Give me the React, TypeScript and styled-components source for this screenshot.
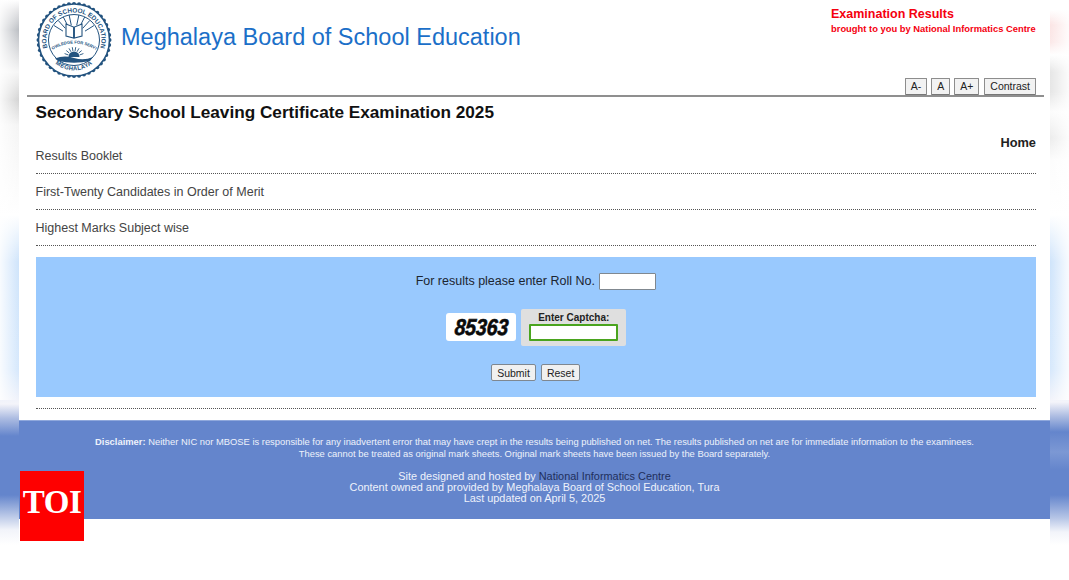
import React from "react";
import styled, { createGlobalStyle } from "styled-components";

const Global = createGlobalStyle`
  html, body { margin: 0; padding: 0; background: #fff; }
  body { font-family: "Liberation Sans", Arial, sans-serif; color: #222; }
`;

const Stage = styled.div`
  display: flex;
  width: 1069px;
  height: 580px;
  overflow: hidden;
  position: relative;
`;

const leftStops = `#fff 0, #e6e6e8 10px, #bcbfc4 30px, #dfe0e2 55px, #f6f6f6 72px, #d4d4d4 100px, #f4f4f4 125px, #fff 215px,
  #cfe4fb 262px, #d6e8fc 370px, #f4f4fa 404px, #aebde2 418px, #6485cc 436px, #6485cc 495px, #b6c5e6 515px, #f2f4fa 530px, #fff 545px`;
const rightStops = `#fff 10px, #fbe4e4 25px, #fbe8e8 42px, #fff 55px, #e6e6e6 72px, #e6e6e6 92px, #fcfcfc 112px, #ececec 138px, #fcfcfc 160px, #fff 215px,
  #cfe4fb 262px, #d6e8fc 370px, #f4f4fa 402px, #aebde2 416px, #6485cc 432px, #7c98d4 452px, #6485cc 470px, #6485cc 495px, #b6c5e6 518px, #f2f4fa 532px, #fff 545px`;

const Strip = styled.div<{ $side: "left" | "right" }>`
  flex: 0 0 19px;
  height: 580px;
  background:
    linear-gradient(to ${(p) => (p.$side === "left" ? "right" : "left")}, rgba(255,255,255,.85), rgba(255,255,255,0)) 0 0 / 100% 400px no-repeat,
    linear-gradient(to bottom, ${(p) => (p.$side === "left" ? leftStops : rightStops)});
`;

const Page = styled.main`
  flex: 0 0 1031px;
  background: #fff;
  display: flex;
  flex-direction: column;
`;

const Header = styled.header`
  display: flex;
  align-items: flex-start;
  height: 78px;
  padding: 0 14px 0 17px;
`;

const Seal = styled.svg`
  flex: 0 0 78px;
  width: 78px;
  height: 78px;
`;

const SiteTitle = styled.h1`
  margin: 22px 0 0 7px;
  font-size: 23.5px;
  line-height: 30px;
  font-weight: 400;
  color: #1b6fc8;
  flex: 1;
`;

const Credit = styled.div`
  margin-top: 7px;
  width: 205px;
  white-space: nowrap;
  color: #f5000f;
  font-weight: 700;
`;

const CreditTitle = styled.div`
  font-size: 12.5px;
  line-height: 15px;
`;

const CreditSub = styled.div`
  font-size: 9.4px;
  line-height: 13px;
`;

const Toolbar = styled.div`
  display: flex;
  justify-content: flex-end;
  gap: 4px;
  height: 17px;
  padding-right: 14px;
`;

const ToolButton = styled.button<{ $gap?: boolean }>`
  height: 17px;
  padding: 0 5px 1px;
  margin-left: ${(p) => (p.$gap ? "1px" : "0")};
  box-sizing: border-box;
  background: #f2f2f2;
  border: 1px solid #8d8d8d;
  border-bottom-color: #777;
  border-radius: 1px;
  font: 10.5px/14px "Liberation Sans", Arial, sans-serif;
  color: #222;
`;

const Rule = styled.hr`
  margin: 0 6px 0 8px;
  border: 0;
  height: 2px;
  background: #8f8f8f;
`;

const Content = styled.div`
  padding: 0 14px 0 16.5px;
  display: flex;
  flex-direction: column;
`;

const PageHeading = styled.h2`
  margin: 5px 0 0;
  font-size: 17.2px;
  line-height: 20px;
  font-weight: 700;
  color: #111;
`;

const HomeLink = styled.a`
  align-self: flex-end;
  margin-top: 13px;
  font-size: 12.8px;
  line-height: 16px;
  font-weight: 700;
  color: #222;
  height: 3px;
`;

const NavRow = styled.div`
  height: 35px;
  border-bottom: 1px dotted #555;
  font-size: 12.5px;
  line-height: 36px;
  color: #444;
  display: flex;
  align-items: center;
`;

const FormPanel = styled.form`
  margin-top: 11px;
  height: 140px;
  background: #99c9fe;
  display: flex;
  flex-direction: column;
  align-items: center;
`;

const RollLine = styled.label`
  margin-top: 16px;
  display: flex;
  align-items: center;
  gap: 4px;
  height: 16px;
  font-size: 12.5px;
  color: #1c2530;
`;

const RollInput = styled.input`
  box-sizing: border-box;
  width: 57px;
  height: 17px;
  background: #fff;
  border: 1px solid #808890;
  border-radius: 1px;
  padding: 0;
`;

const CaptchaRow = styled.div`
  margin-top: 19px;
  display: flex;
  align-items: center;
  gap: 5px;
  height: 38px;
  padding-left: 1px;
`;

const CaptchaImage = styled.div`
  width: 70px;
  height: 28px;
  background: #fff;
  border-radius: 3px;
  display: flex;
  align-items: center;
  justify-content: center;
`;

const CaptchaCode = styled.span`
  font-family: "Liberation Sans", Arial, sans-serif;
  font-size: 23px;
  font-weight: 700;
  font-style: italic;
  color: #0a0a0a;
  letter-spacing: -0.2px;
  display: inline-block;
  transform: scaleX(0.85) skewX(-5deg);
  -webkit-text-stroke: 0.6px #0a0a0a;
`;

const CaptchaBox = styled.div`
  width: 105px;
  height: 37px;
  box-sizing: border-box;
  background: #dfdfdf;
  border-radius: 2px;
  display: flex;
  flex-direction: column;
  align-items: center;
  padding-top: 2px;
`;

const CaptchaLabel = styled.label`
  font-size: 10px;
  line-height: 13px;
  font-weight: 700;
  color: #222;
`;

const CaptchaInput = styled.input`
  box-sizing: border-box;
  width: 89px;
  height: 17px;
  background: #fff;
  border: 2px solid #4aa41e;
  border-radius: 1px;
  padding: 0;
`;

const Actions = styled.div`
  margin-top: 18px;
  display: flex;
  gap: 5px;
`;

const ActionButton = styled.button`
  height: 17px;
  padding: 0 5px;
  box-sizing: border-box;
  background: #f0f0f0;
  border: 1px solid #7f8790;
  border-radius: 2px;
  font: 10.5px/14px "Liberation Sans", Arial, sans-serif;
  color: #222;
`;

const EndRule = styled.div`
  margin-top: 11px;
  border-bottom: 1px dotted #555;
  height: 0;
`;

const Footer = styled.footer`
  margin-top: 11px;
  height: 99px;
  box-sizing: border-box;
  background: #6485cc;
  border-top: 1px solid #8fa8dc;
  padding-top: 15px;
  text-align: center;
  color: #eef2fb;
`;

const Disclaimer = styled.p`
  margin: 0;
  font-size: 9.4px;
  line-height: 12px;
`;

const Credits = styled.p`
  margin: 11px 0 0;
  font-size: 10.9px;
  line-height: 11px;
`;

const DarkLink = styled.a`
  color: #1f2f5c;
`;

const ToiBadge = styled.div`
  position: absolute;
  left: 20px;
  top: 471px;
  width: 64px;
  height: 70px;
  background: #fe0000;
  color: #fff;
  font-family: "Liberation Serif", "Times New Roman", serif;
  font-weight: 700;
  font-size: 33px;
  line-height: 63px;
  text-align: center;
  letter-spacing: -0.4px;
`;

const ink = "#23537f";

const rays = [-58, -42, -27, -12, 12, 27, 42, 58];
const sunRays = [-70, -50, -30, -10, 10, 30, 50, 70];

function polar(cx: number, cy: number, r: number, deg: number) {
  const a = (deg * Math.PI) / 180;
  return { x: cx + r * Math.sin(a), y: cy - r * Math.cos(a) };
}

function SealLogo() {
  const scallops = Array.from({ length: 44 }, (_, i) => (i / 44) * 360);
  return (
    <Seal viewBox="0 0 78 78" aria-label="Board seal">
      <defs>
        <path id="sealTop" d="M13 51.4 A27.5 27.5 0 1 1 63 51.4" />
        <path id="sealArc" d="M16 50 Q38 37 60 50" />
        <path id="sealBottom" d="M17 62 Q38 79 59 62" />
      </defs>
      {scallops.map((a) => (
        <circle
          key={a}
          cx={38 + 35.5 * Math.cos((a * Math.PI) / 180)}
          cy={40 + 36 * Math.sin((a * Math.PI) / 180)}
          r="2"
          fill={ink}
        />
      ))}
      <ellipse cx="38" cy="40" rx="35.5" ry="36" fill="#fff" stroke={ink} strokeWidth="1.6" />
      <ellipse cx="38" cy="40" rx="25.5" ry="25.5" fill="none" stroke={ink} strokeWidth="1" />
      <text fontFamily="Liberation Sans" fontWeight="700" fontSize="6.4" fill={ink}>
        <textPath href="#sealTop" startOffset="50%" textAnchor="middle">BOARD OF SCHOOL EDUCATION</textPath>
      </text>
      {rays.map((r) => {
        const a = polar(38, 38, 13, r);
        const b = polar(38, 38, 23.5, r);
        return <line key={r} x1={a.x} y1={a.y} x2={b.x} y2={b.y} stroke={ink} strokeWidth="1" />;
      })}
      <path d="M30 24 L37.6 27 L37.6 38 L30 36 Z M46 24 L38.4 27 L38.4 38 L46 36 Z" fill="#fff" stroke={ink} strokeWidth="1.1" />
      <text fontFamily="Liberation Sans" fontWeight="700" fontSize="4.2" fill={ink}>
        <textPath href="#sealArc" startOffset="50%" textAnchor="middle">KNOWLEDGE FOR SERVICE</textPath>
      </text>
      {sunRays.map((r) => {
        const a = polar(38, 57, 6, r);
        const b = polar(38, 57, 10, r);
        return <line key={r} x1={a.x} y1={a.y} x2={b.x} y2={b.y} stroke={ink} strokeWidth="0.9" />;
      })}
      <path d="M32.5 57 A5.5 5.5 0 0 1 43.5 57 Z" fill={ink} />
      <path d="M19 58.5 Q28 55 38 58 T57 57 L54 61 Q38 64.5 22 61 Z" fill={ink} />
      <text fontFamily="Liberation Sans" fontWeight="700" fontSize="6" fill={ink} letterSpacing="0.3">
        <textPath href="#sealBottom" startOffset="50%" textAnchor="middle">MEGHALAYA</textPath>
      </text>
    </Seal>
  );
}

export default function App() {
  return (
    <>
      <Global />
      <Stage>
        <Strip $side="left" />
        <Page>
          <Header>
            <SealLogo />
            <SiteTitle>Meghalaya Board of School Education</SiteTitle>
            <Credit>
              <CreditTitle>Examination Results</CreditTitle>
              <CreditSub>brought to you by National Informatics Centre</CreditSub>
            </Credit>
          </Header>
          <Toolbar>
            <ToolButton type="button">A-</ToolButton>
            <ToolButton type="button">A</ToolButton>
            <ToolButton type="button">A+</ToolButton>
            <ToolButton type="button" $gap>Contrast</ToolButton>
          </Toolbar>
          <Rule />
          <Content>
            <PageHeading>Secondary School Leaving Certificate Examination 2025</PageHeading>
            <HomeLink>Home</HomeLink>
            <NavRow>Results Booklet</NavRow>
            <NavRow>First-Twenty Candidates in Order of Merit</NavRow>
            <NavRow>Highest Marks Subject wise</NavRow>
            <FormPanel>
              <RollLine>
                For results please enter Roll No.
                <RollInput type="text" />
              </RollLine>
              <CaptchaRow>
                <CaptchaImage>
                  <CaptchaCode>85363</CaptchaCode>
                </CaptchaImage>
                <CaptchaBox>
                  <CaptchaLabel>Enter Captcha:</CaptchaLabel>
                  <CaptchaInput type="text" />
                </CaptchaBox>
              </CaptchaRow>
              <Actions>
                <ActionButton type="button">Submit</ActionButton>
                <ActionButton type="button">Reset</ActionButton>
              </Actions>
            </FormPanel>
            <EndRule />
          </Content>
          <Footer>
            <Disclaimer>
              <b>Disclaimer:</b> Neither NIC nor MBOSE is responsible for any inadvertent error that may have crept in the results being published on net. The results published on net are for immediate information to the examinees.
              <br />
              These cannot be treated as original mark sheets. Original mark sheets have been issued by the Board separately.
            </Disclaimer>
            <Credits>
              Site designed and hosted by <DarkLink>National Informatics Centre</DarkLink>
              <br />
              Content owned and provided by Meghalaya Board of School Education, Tura
              <br />
              Last updated on April 5, 2025
            </Credits>
          </Footer>
        </Page>
        <Strip $side="right" />
        <ToiBadge>TOI</ToiBadge>
      </Stage>
    </>
  );
}
